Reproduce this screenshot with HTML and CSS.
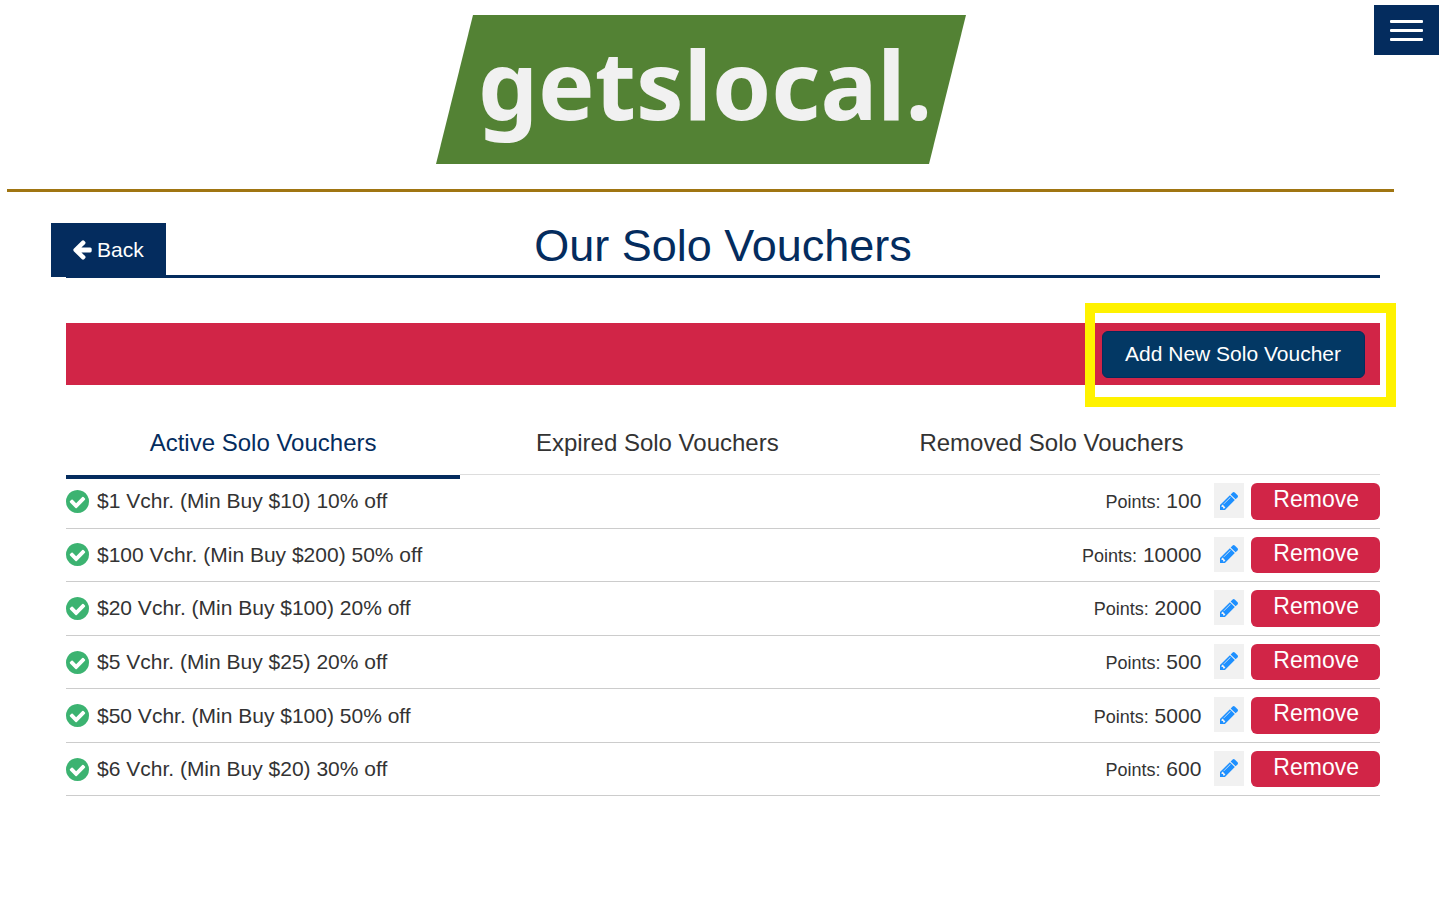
FILE: index.html
```html
<!DOCTYPE html>
<html lang="en">
  <head>
    <meta charset="utf-8">
    <meta name="viewport" content="width=device-width, initial-scale=1">
    <title>Our Solo Vouchers</title>
    <link rel="stylesheet" href="styles.css">
  </head>
  <body>
    <!-- icons -->
    <svg class="sprite" aria-hidden="true">
      <symbol id="icon-back" viewBox="64 160 1472 1600">
        <path d="M1536 896v128q0 53-32.5 90.5T1419 1152H715l293 294q38 36 38 90t-38 90l-75 76q-37 37-90 37-52 0-91-37L101 1050q-37-37-37-90 0-52 37-91l651-650q38-38 91-38 52 0 90 38l75 74q38 38 38 91t-38 91L715 768h704q52 0 84.5 37.5T1536 896z"/>
      </symbol>
      <symbol id="icon-check" viewBox="128 128 1536 1536">
        <path d="M1412 734q0-28-18-46l-91-90q-19-19-45-19t-45 19l-408 407-226-226q-19-19-45-19t-45 19l-91 90q-18 18-18 46 0 27 18 45l362 362q19 19 45 19 27 0 46-19l543-543q18-18 18-45zm252 162q0 209-103 385.5T1281.5 1561 896 1664t-385.5-103T231 1281.5 128 896t103-385.5T510.5 231 896 128t385.5 103T1561 510.5 1664 896z"/>
      </symbol>
      <symbol id="icon-pencil" viewBox="128 149 1515 1515">
        <path d="M491 1536l91-91-235-235-91 91v107h128v128h107zm523-928q0-22-22-22-10 0-17 7l-542 542q-7 7-7 17 0 22 22 22 10 0 17-7l542-542q7-7 7-17zm-54-192l416 416-832 832H128v-416zm683 96q0 53-37 90l-166 166-416-416 166-165q36-38 90-38 53 0 91 38l235 234q37 39 37 91z"/>
      </symbol>
    </svg>

    <button class="menu-btn" type="button" aria-label="Menu">
      <span></span>
      <span></span>
      <span></span>
    </button>

    <header class="site-header">
      <svg class="logo" viewBox="0 0 530 149" width="530" height="149" role="img" aria-label="getslocal.">
        <polygon points="37,0 530,0 493,149 0,149" fill="#538234"/>
        <text class="logo-text" x="42" y="105">getslocal.</text>
      </svg>
    </header>

    <main class="content">
      <div class="page-title">
        <a class="back-btn" href="#"><svg class="icon-back"><use href="#icon-back"/></svg> Back</a>
        <h1>Our Solo Vouchers</h1>
      </div>

      <div class="action-bar">
        <button class="add-btn" type="button">Add New Solo Voucher</button>
        <div class="highlight"></div>
      </div>

      <nav class="tabs">
        <button class="tab active" type="button">Active Solo Vouchers</button>
        <button class="tab" type="button">Expired Solo Vouchers</button>
        <button class="tab" type="button">Removed Solo Vouchers</button>
      </nav>

      <ul class="vouchers">
        <li>
          <svg class="icon-check"><use href="#icon-check"/></svg>
          <span class="name">$1 Vchr. (Min Buy $10) 10% off</span>
          <span class="points"><small>Points:</small> 100</span>
          <button class="edit-btn" type="button" aria-label="Edit"><svg class="icon-pencil"><use href="#icon-pencil"/></svg></button>
          <button class="remove-btn" type="button">Remove</button>
        </li>
        <li>
          <svg class="icon-check"><use href="#icon-check"/></svg>
          <span class="name">$100 Vchr. (Min Buy $200) 50% off</span>
          <span class="points"><small>Points:</small> 10000</span>
          <button class="edit-btn" type="button" aria-label="Edit"><svg class="icon-pencil"><use href="#icon-pencil"/></svg></button>
          <button class="remove-btn" type="button">Remove</button>
        </li>
        <li>
          <svg class="icon-check"><use href="#icon-check"/></svg>
          <span class="name">$20 Vchr. (Min Buy $100) 20% off</span>
          <span class="points"><small>Points:</small> 2000</span>
          <button class="edit-btn" type="button" aria-label="Edit"><svg class="icon-pencil"><use href="#icon-pencil"/></svg></button>
          <button class="remove-btn" type="button">Remove</button>
        </li>
        <li>
          <svg class="icon-check"><use href="#icon-check"/></svg>
          <span class="name">$5 Vchr. (Min Buy $25) 20% off</span>
          <span class="points"><small>Points:</small> 500</span>
          <button class="edit-btn" type="button" aria-label="Edit"><svg class="icon-pencil"><use href="#icon-pencil"/></svg></button>
          <button class="remove-btn" type="button">Remove</button>
        </li>
        <li>
          <svg class="icon-check"><use href="#icon-check"/></svg>
          <span class="name">$50 Vchr. (Min Buy $100) 50% off</span>
          <span class="points"><small>Points:</small> 5000</span>
          <button class="edit-btn" type="button" aria-label="Edit"><svg class="icon-pencil"><use href="#icon-pencil"/></svg></button>
          <button class="remove-btn" type="button">Remove</button>
        </li>
        <li>
          <svg class="icon-check"><use href="#icon-check"/></svg>
          <span class="name">$6 Vchr. (Min Buy $20) 30% off</span>
          <span class="points"><small>Points:</small> 600</span>
          <button class="edit-btn" type="button" aria-label="Edit"><svg class="icon-pencil"><use href="#icon-pencil"/></svg></button>
          <button class="remove-btn" type="button">Remove</button>
        </li>
      </ul>
    </main>
  </body>
</html>
```
FILE: styles.css
```css
* {
    box-sizing: border-box;
}
body {
    margin: 0;
    background: #fff;
    color: #333;
    font-family: "Liberation Sans", Arial, Helvetica, sans-serif;
    font-size: 21px;
}
button {
    font-family: inherit;
    border: none;
    cursor: pointer;
}
svg {
    display: block;
    fill: currentColor;
}
.sprite {
    position: absolute;
    width: 0;
    height: 0;
}

/* header */
.menu-btn {
    position: absolute;
    top: 5px;
    right: 16px;
    display: flex;
    flex-direction: column;
    gap: 6px;
    width: 65px;
    padding: 15px 16px 14px;
    background: #042c5e;
}
.menu-btn span {
    height: 3px;
    border-radius: 1px;
    background: #fff;
}
.site-header {
    margin: 0 61px 0 7px;
    padding: 15px 0 25px;
    border-bottom: 3px solid #a07512;
}
.logo {
    margin: 0 auto;
    max-width: 100%;
}
.logo-text {
    fill: #f1f1f1;
    font-family: "Noto Sans", sans-serif;
    font-size: 95px;
    font-weight: bold;
}

/* title */
.content {
    margin: 31px 75px 0 66px;
}
.page-title {
    display: grid;
    grid-template-columns: 1fr auto 1fr;
    border-bottom: 3px solid #042c5e;
}
.page-title h1 {
    margin: 0;
    color: #042c5e;
    font-size: 45px;
    font-weight: normal;
    line-height: 46px;
}
.back-btn {
    display: flex;
    align-items: center;
    justify-self: start;
    gap: 5px;
    height: 54px;
    margin: 0 0 -2px -15px;
    padding: 0 22px;
    background: #042c5e;
    color: #fff;
    text-decoration: none;
}
.icon-back {
    width: 19px;
    height: 20px;
}

/* red bar */
.action-bar {
    position: relative;
    display: flex;
    justify-content: flex-end;
    margin-top: 45px;
    padding: 8px 15px 7px;
    background: #d12547;
}
.add-btn {
    padding: 9px 23px 11px 22px;
    border: 1px solid #042c5e;
    border-radius: 6px;
    background: #033864;
    color: #fff;
    font-size: 21px;
    line-height: 25px;
}
.highlight {
    position: absolute;
    top: -20px;
    right: -16px;
    bottom: -22px;
    width: 311px;
    border: 10px solid #fff200;
    pointer-events: none;
}

/* tabs */
.tabs {
    display: flex;
    margin-top: 27px;
    border-bottom: 1px solid #ddd;
}
.tab {
    position: relative;
    width: 30%;
    padding: 16px 0;
    background: none;
    color: #333;
    font-size: 24px;
    line-height: 30px;
}
.tab.active {
    color: #042c5e;
}
.tab.active::after {
    content: "";
    position: absolute;
    left: 0;
    right: 0;
    bottom: -5px;
    border-top: 1px solid #fff;
    border-bottom: 4px solid #042c5e;
}

/* voucher list */
.vouchers {
    margin: 0;
    padding: 0;
    list-style: none;
}
.vouchers li {
    display: flex;
    align-items: center;
    padding: 8px 0;
    border-bottom: 1px solid #ccc;
}
.icon-check {
    width: 23px;
    height: 23px;
    margin-right: 8px;
    color: #3cb371;
}
.name {
    flex: 1;
}
.points small {
    font-size: 18px;
}
.edit-btn {
    align-self: flex-start;
    width: 30px;
    height: 35px;
    margin: 0 7px 0 13px;
    padding: 0 6px;
    background: #f1f1f1;
    color: #1e90ff;
}
.icon-pencil {
    width: 18px;
    height: 18px;
}
.remove-btn {
    padding: 0 21px 3px 22px;
    border-radius: 6px;
    background: #d12547;
    color: #fff;
    font-size: 23px;
    line-height: 1.46;
}
```
